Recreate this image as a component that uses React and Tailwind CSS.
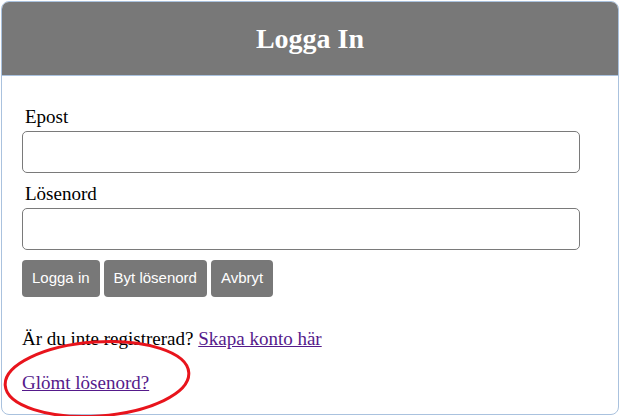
import React from "react";

export default function App() {
  return (
    <div className="w-[620px] h-[416px] bg-white p-px relative" style={{ fontFamily: '"Liberation Serif", "Times New Roman", serif' }}>
      <div className="w-[618px] h-[414px] rounded-[8px] border border-[#aac2de] overflow-hidden flex flex-col">
        <div className="h-[74px] shrink-0 bg-[#787878] border-b border-[#aac2de] flex items-center justify-center">
          <h1 className="text-[28px] font-bold text-white leading-none">Logga In</h1>
        </div>
        <div className="pl-[20px] pr-[38px] pt-[30px] flex flex-col">
          <label className="text-[19px] leading-[22px] text-black pl-[3px]">Epost</label>
          <input className="mt-[3px] h-[42px] w-full rounded-[5px] border border-[#7a7a7a] bg-white" />
          <label className="mt-[10px] text-[19px] leading-[22px] text-black pl-[3px]">Lösenord</label>
          <input type="password" className="mt-[3px] h-[42px] w-full rounded-[5px] border border-[#7a7a7a] bg-white" />
          <div className="mt-[10px] flex gap-[4px]" style={{ fontFamily: '"Liberation Sans", Arial, sans-serif' }}>
            <button className="h-[37px] px-[10px] rounded-[4px] bg-[#787878] text-white text-[15px]">Logga in</button>
            <button className="h-[37px] px-[10px] rounded-[4px] bg-[#787878] text-white text-[15px]">Byt lösenord</button>
            <button className="h-[37px] px-[10px] rounded-[4px] bg-[#787878] text-white text-[15px]">Avbryt</button>
          </div>
          <p className="mt-[31px] text-[19px] leading-[22px] text-black">
            Är du inte registrerad? <a href="#" className="text-[#551a8b] underline">Skapa konto här</a>
          </p>
          <p className="mt-[22px] text-[19px] leading-[22px]">
            <a href="#" className="text-[#551a8b] underline">Glömt lösenord?</a>
          </p>
        </div>
      </div>
      <svg className="absolute left-0 top-0 pointer-events-none" width="620" height="416">
        <ellipse cx="97" cy="379" rx="92" ry="37" transform="rotate(-4 97 379)" fill="none" stroke="#e8141c" strokeWidth="3" />
      </svg>
    </div>
  );
}
